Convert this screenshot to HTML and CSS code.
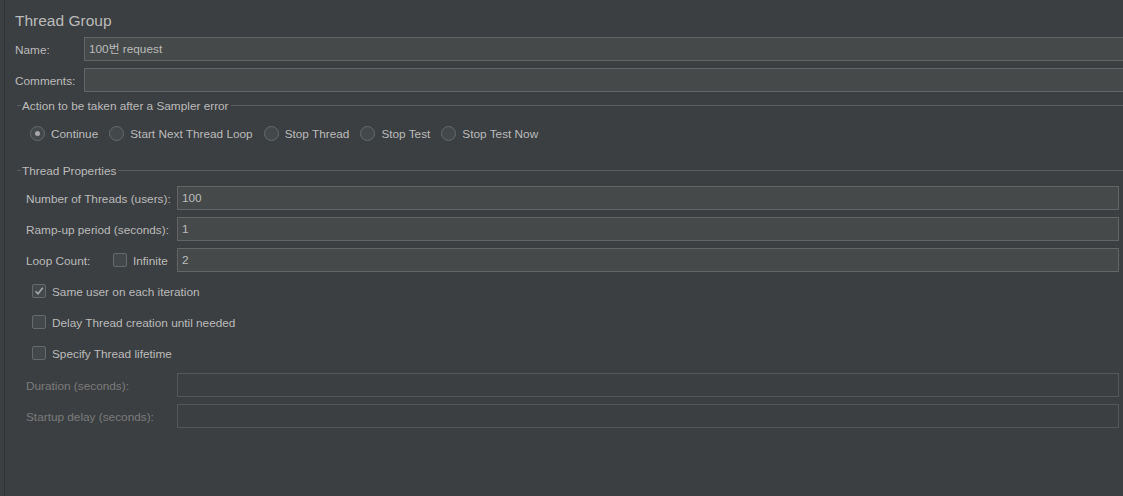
FILE: index.html
```html
<!DOCTYPE html>
<html lang="en">
<head>
    <meta charset="UTF-8">
    <title>Thread Group</title>
    <link rel="stylesheet" href="styles.css">
</head>
<body>
    <div class="app">
        <div class="gutter"></div>
        <div class="panel">
            <h1 class="title">Thread Group</h1>

            <div class="row">
                <span class="top-label">Name:</span>
                <div class="field wide">100번 request</div>
            </div>
            <div class="row">
                <span class="top-label">Comments:</span>
                <div class="field wide"></div>
            </div>

            <div class="legend legend-action">
                <span class="dash"></span>
                <span class="legend-text">Action to be taken after a Sampler error</span>
                <span class="line"></span>
            </div>
            <div class="radios">
                <label class="radio-item"><span class="radio checked"></span><span class="txt">Continue</span></label>
                <label class="radio-item"><span class="radio"></span><span class="txt">Start Next Thread Loop</span></label>
                <label class="radio-item"><span class="radio"></span><span class="txt">Stop Thread</span></label>
                <label class="radio-item"><span class="radio"></span><span class="txt">Stop Test</span></label>
                <label class="radio-item"><span class="radio"></span><span class="txt">Stop Test Now</span></label>
            </div>

            <div class="legend legend-props">
                <span class="dash"></span>
                <span class="legend-text">Thread Properties</span>
                <span class="line"></span>
            </div>
            <div class="props">
                <div class="prop-row first">
                    <span class="prop-label">Number of Threads (users):</span>
                    <div class="field">100</div>
                </div>
                <div class="prop-row">
                    <span class="prop-label">Ramp-up period (seconds):</span>
                    <div class="field">1</div>
                </div>
                <div class="prop-row">
                    <span class="prop-label loop">
                        <span class="loop-text">Loop Count:</span>
                        <span class="box"></span>
                        <span class="txt">Infinite</span>
                    </span>
                    <div class="field">2</div>
                </div>

                <div class="check-row">
                    <span class="box checked">
                        <svg width="12" height="12" viewBox="0 0 12 12"><polyline points="2.5,6.2 5,8.8 9.8,2.8" fill="none" stroke="#a9a9a9" stroke-width="1.6"/></svg>
                    </span>
                    <span class="txt">Same user on each iteration</span>
                </div>
                <div class="check-row">
                    <span class="box"></span>
                    <span class="txt">Delay Thread creation until needed</span>
                </div>
                <div class="check-row">
                    <span class="box"></span>
                    <span class="txt">Specify Thread lifetime</span>
                </div>

                <div class="prop-row disabled spaced">
                    <span class="prop-label">Duration (seconds):</span>
                    <div class="field"></div>
                </div>
                <div class="prop-row disabled">
                    <span class="prop-label">Startup delay (seconds):</span>
                    <div class="field"></div>
                </div>
            </div>
        </div>
    </div>
</body>
</html>
```

FILE: styles.css
```css
html, body {
    margin: 0;
    height: 100%;
}
body {
    background: #3c3f41;
    color: #bbbbbb;
    font-family: "Liberation Sans", "Noto Sans CJK KR", Arial, sans-serif;
    font-size: 11.8px;
    overflow: hidden;
}
.app {
    display: flex;
    height: 496px;
}
.gutter {
    width: 4px;
    border-right: 1px solid #323435;
    flex-shrink: 0;
}
.panel {
    flex: 1;
    padding-left: 10px;
    overflow: hidden;
}
.title {
    margin: 0;
    padding-top: 11px;
    height: 28px;
    box-sizing: border-box;
    font-size: 15.5px;
    font-weight: normal;
    line-height: 20px;
    color: #bbbbbb;
}
.row {
    display: flex;
    align-items: center;
    height: 24px;
    margin-top: 7px;
    margin-right: -20px;
}
.row:first-of-type {
    margin-top: 9px;
}
.top-label {
    width: 69px;
    flex-shrink: 0;
    padding-top: 1px;
}
.txt,
.loop-text,
.prop-label,
.legend-text {
    padding-top: 1px;
}
.field {
    flex: 1;
    height: 24px;
    box-sizing: border-box;
    border: 1px solid #646464;
    background: #45494a;
    padding: 0 4px;
    line-height: 23px;
    color: #bbbbbb;
}
.legend {
    display: flex;
    align-items: center;
    height: 16px;
    margin-left: 2px;
}
.legend-action {
    margin-top: 5px;
}
.legend-props {
    margin-top: 17px;
}
.dash {
    width: 4px;
    height: 1px;
    background: #5a5d5f;
}
.legend-text {
    padding-left: 1px;
    padding-right: 2px;
}
.line {
    flex: 1;
    height: 1px;
    background: #5a5d5f;
}
.radios {
    display: flex;
    align-items: center;
    height: 24px;
    margin-top: 8px;
    padding-left: 15px;
}
.radio-item {
    display: flex;
    align-items: center;
    margin-right: 11px;
}
.radio {
    width: 15px;
    height: 15px;
    box-sizing: border-box;
    border: 1px solid #676a6c;
    border-radius: 50%;
    background: #43494a;
    margin-right: 6px;
    display: flex;
    align-items: center;
    justify-content: center;
}
.radio.checked::after {
    content: "";
    width: 5px;
    height: 5px;
    border-radius: 50%;
    background: #a7a7a7;
}
.props {
    padding-left: 11px;
    padding-right: 4px;
}
.prop-row {
    display: flex;
    align-items: center;
    height: 24px;
    margin-top: 7px;
}
.prop-row.first {
    margin-top: 8px;
}
.prop-row.spaced {
    margin-top: 8px;
}
.prop-label {
    width: 151px;
    flex-shrink: 0;
}
.prop-label.loop {
    display: flex;
    align-items: center;
    padding-top: 0;
}
.loop-text {
    width: 87px;
}
.prop-label.loop .box {
    margin-right: 6px;
}
.box {
    width: 14px;
    height: 14px;
    box-sizing: border-box;
    border: 1px solid #676a6c;
    border-radius: 2px;
    background: #43494a;
    display: inline-flex;
    align-items: center;
    justify-content: center;
    flex-shrink: 0;
}
.check-row {
    display: flex;
    align-items: center;
    height: 24px;
    margin-top: 7px;
    padding-left: 6px;
}
.check-row .box {
    margin-right: 6px;
}
.disabled {
    color: #7b7b7b;
}
.disabled .field {
    background: #3c3f41;
    border-color: #55585a;
}
```
